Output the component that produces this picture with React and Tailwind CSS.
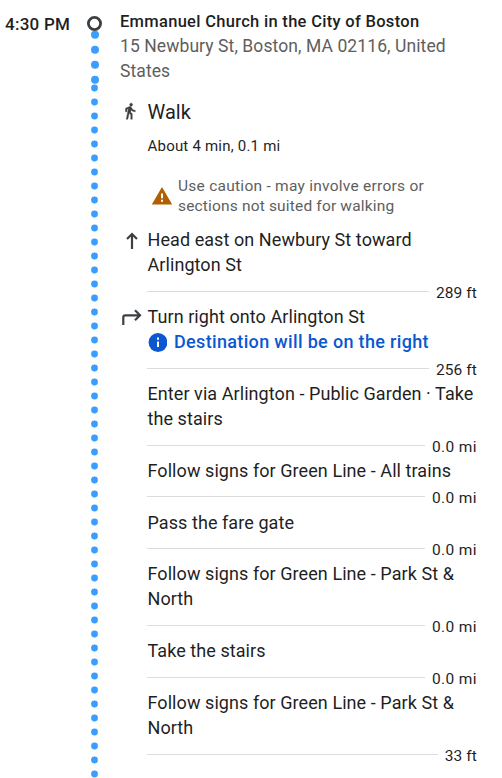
const STEPS = [
  { lines: ['Head east on Newbury St toward', 'Arlington St'], distance: '289 ft', icon: 'straight' },
  { lines: ['Turn right onto Arlington St'], note: 'Destination will be on the right', distance: '256 ft', icon: 'right' },
  { lines: ['Enter via Arlington - Public Garden · Take', 'the stairs'], distance: '0.0 mi' },
  { lines: ['Follow signs for Green Line - All trains'], distance: '0.0 mi' },
  { lines: ['Pass the fare gate'], distance: '0.0 mi' },
  { lines: ['Follow signs for Green Line - Park St &', 'North'], distance: '0.0 mi' },
  { lines: ['Take the stairs'], distance: '0.0 mi' },
  { lines: ['Follow signs for Green Line - Park St &', 'North'], distance: '33 ft' },
];

const BIG_DOTS = [34.7, 49.7, 64.7, 79.7];
const SMALL_DOTS = Array.from({ length: 50 }, (_, i) => 88 + i * 14);

function WalkIcon() {
  return (
    <svg className="ml-[1px] h-[18px] w-[18px] shrink-0" viewBox="0 0 24 24" fill="#3c4043" stroke="#3c4043" strokeWidth="0.5">
      <path d="M13.5 5.5c1.1 0 2-.9 2-2s-.9-2-2-2-2 .9-2 2 .9 2 2 2zM9.8 8.9L7 23h2.1l1.8-8 2.1 2v6h2v-7.5l-2.1-2 .6-3C14.8 12 16.8 13 19 13v-2c-1.9 0-3.5-1-4.3-2.4l-1-1.6c-.4-.6-1-1-1.7-1-.3 0-.5.1-.8.1L6 8.3V13h2V9.6l1.8-.7" />
    </svg>
  );
}

function StraightIcon() {
  return (
    <svg className="mt-[4px] ml-[4px] h-[18px] w-[16px]" viewBox="0 0 16 18" fill="none" stroke="#3c4043" strokeWidth="2.2">
      <path d="M8 17V2M3 7l5-5 5 5" />
    </svg>
  );
}

function TurnRightIcon() {
  return (
    <svg className="mt-[3px] ml-[1px] h-[18px] w-[22px]" viewBox="0 0 22 18" fill="none" stroke="#3c4043" strokeWidth="2.2">
      <path d="M2.3 17V9.3a2 2 0 0 1 2-2H19M14 2.3l5 5-5 5" />
    </svg>
  );
}

function Timeline() {
  return (
    <svg className="h-[778px] w-[24px] shrink-0" viewBox="0 0 24 778">
      {BIG_DOTS.map((y) => (
        <circle key={y} cx="13" cy={y} r="4" fill="#3b9eff" />
      ))}
      {SMALL_DOTS.map((y) => (
        <circle key={y} cx="12.5" cy={y} r="3.4" fill="#3b9eff" />
      ))}
      <circle cx="12.5" cy="23.5" r="6.1" fill="#fff" stroke="#3c4043" strokeWidth="2.8" />
    </svg>
  );
}

function Step({ step }) {
  return (
    <li className="flex">
      <div className="w-[27px] shrink-0">
        {step.icon === 'straight' && <StraightIcon />}
        {step.icon === 'right' && <TurnRightIcon />}
      </div>
      <div className="w-[330px]">
        {step.lines.map((line) => (
          <p key={line} className="pl-[0.5px] text-[18px] leading-[24.75px] tracking-[0.07px] whitespace-nowrap">{line}</p>
        ))}
        {step.note && (
          <p className="flex items-center text-[18px] leading-[25.5px] font-medium tracking-[0.34px] whitespace-nowrap text-[#0b57d0]">
            <svg className="mt-[1px] mr-[7px] h-[19px] w-[20px]" viewBox="0 0 20 19">
              <circle cx="11" cy="9.5" r="9.4" fill="#0b57d0" />
              <path d="M11 4.5v2.2M11 8.5v5.6" stroke="#fff" strokeWidth="2" />
            </svg>
            {step.note}
          </p>
        )}
        <div className="flex h-[27.15px] items-center gap-[7px]">
          <div className="h-px flex-1 bg-[#dadce0]" />
          {step.distance.endsWith('mi') ? (
            <span className="pt-[3px] text-[15.5px] leading-[20px] tracking-[0.4px]">{step.distance}</span>
          ) : (
            <span className="pt-[3px] text-[15.5px] leading-[20px] tracking-[0.1px]">{step.distance}</span>
          )}
        </div>
      </div>
    </li>
  );
}

export default function App() {
  return (
    <div className="flex h-[778px] w-[502px] overflow-hidden bg-white font-['Roboto',sans-serif] text-[#1f1f1f]">
      <div className="w-[82px] shrink-0 pt-[12px] pl-[5px] text-[17px] leading-[24px] font-medium tracking-[0.25px] whitespace-nowrap">4:30 PM</div>
      <Timeline />
      <div className="ml-[14px] w-[370px] shrink-0 pt-[9px]">
        <h1 className="text-[16.5px] leading-[25px] font-medium tracking-[0.3px] whitespace-nowrap">Emmanuel Church in the City of Boston</h1>
        <p className="text-[17.5px] leading-[25px] tracking-[0.09px] whitespace-nowrap text-[#5e5e5e]">
          15 Newbury St, Boston, MA 02116, United<br />States
        </p>
        <div className="mt-[16px] flex h-[24px]">
          <div className="w-[27.5px] shrink-0 pt-[2px]">
            <WalkIcon />
          </div>
          <h2 className="text-[20px] leading-[24px]">Walk</h2>
        </div>
        <p className="mt-[12px] ml-[27.5px] text-[15px] leading-[20px] tracking-[0.21px]">About 4 min, 0.1 mi</p>
        <div className="mt-[20px] ml-[31px] flex items-center">
          <svg className="mr-[5px] h-[18px] w-[22px]" viewBox="0 0 22 18">
            <path d="M11 0l10.2 17.6H.8z" fill="#b06000" />
            <path d="M11 6.5v4.8M11 12.8v2" stroke="#fff" strokeWidth="2" />
          </svg>
          <p className="text-[15.5px] leading-[20px] tracking-[0.26px] whitespace-nowrap text-[#5e5e5e]">
            Use caution - may involve errors or<br />
            <span className="tracking-[0.17px]">sections not suited for walking</span>
          </p>
        </div>
        <ol className="mt-[12px]">
          {STEPS.map((step, i) => <Step key={i} step={step} />)}
        </ol>
      </div>
    </div>
  );
}
